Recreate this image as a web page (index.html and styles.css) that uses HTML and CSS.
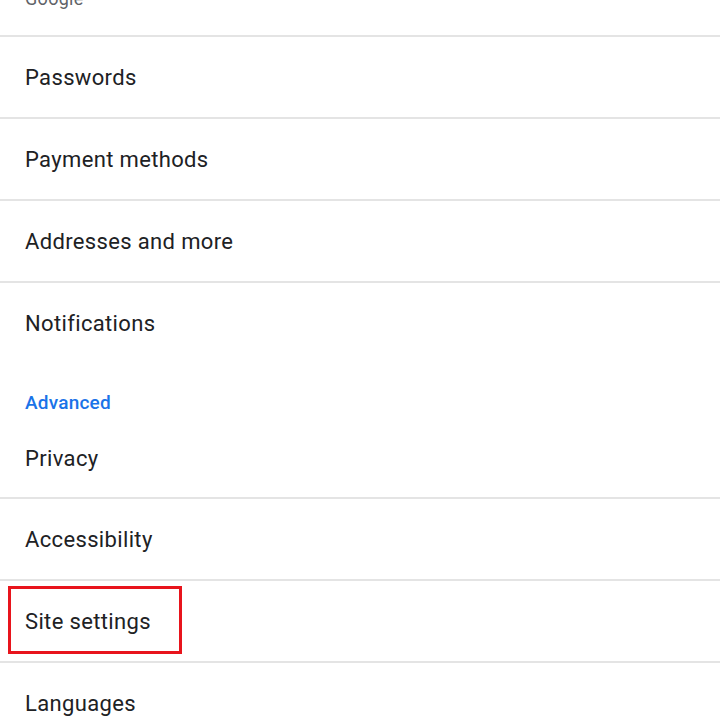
FILE: index.html
```html
<!DOCTYPE html>
<html>
<head>
<meta charset="utf-8">
<link rel="stylesheet" href="styles.css">
</head>
<body>
<div class="list">
  <div class="top-item">
    <div class="title">Sync and Google services</div>
    <div class="summary">Google</div>
  </div>
  <div class="item">Passwords</div>
  <div class="item">Payment methods</div>
  <div class="item">Addresses and more</div>
  <div class="item no-border">Notifications</div>
  <div class="header">Advanced</div>
  <div class="item privacy">Privacy</div>
  <div class="item">Accessibility</div>
  <div class="item"><span class="highlight">Site settings</span></div>
  <div class="item no-border">Languages</div>
</div>
</body>
</html>
```

FILE: styles.css
```css
html, body {
  margin: 0;
  padding: 0;
  background: #ffffff;
}
body {
  width: 720px;
  height: 720px;
  overflow: hidden;
  font-family: Roboto, "Noto Sans", sans-serif;
  color: #202124;
}
.list {
  display: flex;
  flex-direction: column;
}
.top-item {
  height: 37px;
  border-bottom: 2px solid #e4e4e4;
  display: flex;
  flex-direction: column;
  justify-content: flex-end;
  padding: 0 25px 27px;
  box-sizing: border-box;
  overflow: hidden;
}
.top-item .title {
  font-size: 22px;
  line-height: 28px;
}
.top-item .summary {
  font-size: 18px;
  line-height: 18px;
  color: #5f6368;
  letter-spacing: 0.3px;
}
.item {
  height: 82px;
  box-sizing: border-box;
  border-bottom: 2px solid #e4e4e4;
  display: flex;
  align-items: center;
  padding-left: 25px;
  padding-top: 2px;
  font-size: 22px;
  line-height: 26px;
  letter-spacing: 0.35px;
}
.item.no-border {
  border-bottom: none;
  height: 80px;
}
.header {
  height: 54px;
  box-sizing: border-box;
  padding: 29px 25px 0;
  font-size: 19px;
  line-height: 22px;
  font-weight: 500;
  color: #1a73e8;
  letter-spacing: 0.2px;
}
.item.privacy {
  padding-top: 3px;
}
.highlight {
  display: inline-block;
  margin-left: -17px;
  margin-top: -4px;
  padding: 20px 28px 16px 14px;
  border: 3px solid #e8141c;
}
```
